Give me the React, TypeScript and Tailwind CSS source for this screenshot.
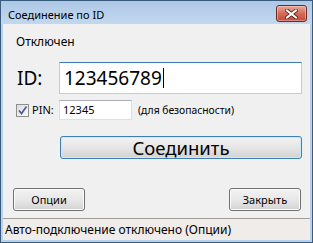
import React from "react";

const font = { fontFamily: '"Noto Sans", "Open Sans", sans-serif' };

function CloseButton() {
  return (
    <div className="w-[31px] h-[17px] rounded-[3px] border border-[#6b2a22] bg-gradient-to-b from-[#e9a99b] via-[#d46b5a] to-[#c4473a] shadow-[inset_0_0_0_1px_rgba(255,220,210,0.45)] flex items-center justify-center">
      <svg width="13" height="10" viewBox="0 0 13 10">
        <path d="M2 1.5 L11 8.5 M11 1.5 L2 8.5" stroke="#5a1e16" strokeWidth="3.6" strokeLinecap="square" />
        <path d="M2 1.5 L11 8.5 M11 1.5 L2 8.5" stroke="#ffffff" strokeWidth="2" strokeLinecap="square" />
      </svg>
    </div>
  );
}

function Checkbox() {
  return (
    <div className="w-[13px] h-[13px] border border-[#8e8f8f] bg-gradient-to-br from-[#dcdcdc] to-[#fbfbfb] flex items-center justify-center shrink-0">
      <svg width="11" height="11" viewBox="0 0 11 11">
        <path d="M2 5.5 L4.5 8.5 L9.5 1.5" stroke="#4b5f98" strokeWidth="1.7" fill="none" />
      </svg>
    </div>
  );
}

export default function App() {
  return (
    <div
      className="w-[313px] h-[243px] bg-[#b9d1ea] border border-[#3a5b7c] flex flex-col text-black"
      style={font}
    >
      <div className="h-[23px] flex justify-between pl-[7px] pr-[5px] bg-gradient-to-b from-[#adc8e6] to-[#c3d8ef]">
        <div className="text-[11px] leading-[16px] pt-[6px]">Соединение по ID</div>
        <div className="pt-[4px]">
          <CloseButton />
        </div>
      </div>
      <div className="flex-1 mx-[2px] mb-[2px] bg-[#f0f0f0] flex flex-col">
        <div className="flex-1 flex flex-col pl-[13px] pr-[8px] pt-[10px]">
          <div className="h-[16px] text-[12px] leading-[16px]">Отключен</div>
          <div className="mt-[12px] h-[32px] flex items-center">
            <div className="w-[43px] text-[19px] leading-[24px] pl-[1px]">ID:</div>
            <div className="w-[243px] h-[32px] border border-[#b5cfe7] border-t-[#3d7bad] bg-white flex items-center pl-[4px]">
              <span className="text-[19px] leading-[24px]">123456789</span>
              <span className="w-[1px] h-[20px] bg-black ml-[1px]" />
            </div>
          </div>
          <div className="mt-[6px] h-[20px] flex items-center">
            <Checkbox />
            <div className="w-[30px] pl-[3px] text-[11px] leading-[14px]">PIN:</div>
            <div className="w-[73px] h-[20px] border border-[#dbdfe6] border-t-[#abadb3] bg-white flex items-center pl-[3px] text-[11px] leading-[14px]">
              12345
            </div>
            <div className="ml-[6px] text-[10.3px] leading-[14px]">(для безопасности)</div>
          </div>
          <div className="mt-[16px] ml-[44px] w-[242px] h-[23px] rounded-[3px] border border-[#3c7fb1] shadow-[inset_0_0_0_1px_#c7ecfb] bg-gradient-to-b from-[#f2f2f2] via-[#e6e6e6] to-[#d2d2d2] flex items-center justify-center">
            <span className="text-[18.5px] leading-[22px]">Соединить</span>
          </div>
          <div className="mt-[29px] -ml-[3px] mr-[1px] flex justify-between">
            <div className="w-[72px] h-[23px] rounded-[3px] border border-[#707070] shadow-[inset_0_0_0_1px_#fcfcfc] bg-gradient-to-b from-[#f2f2f2] via-[#e8e8e8] to-[#d3d3d3] flex items-center justify-center text-[11px] leading-[14px]">
              Опции
            </div>
            <div className="w-[72px] h-[23px] rounded-[3px] border border-[#707070] shadow-[inset_0_0_0_1px_#fcfcfc] bg-gradient-to-b from-[#f2f2f2] via-[#e8e8e8] to-[#d3d3d3] flex items-center justify-center text-[11px] leading-[14px]">
              Закрыть
            </div>
          </div>
        </div>
        <div className="h-[22px] border-t border-[#a0a0a0] bg-[#f0ece9] flex items-center pl-[2px] text-[12px] leading-[14px]">
          Авто-подключение отключено (Опции)
        </div>
      </div>
    </div>
  );
}
